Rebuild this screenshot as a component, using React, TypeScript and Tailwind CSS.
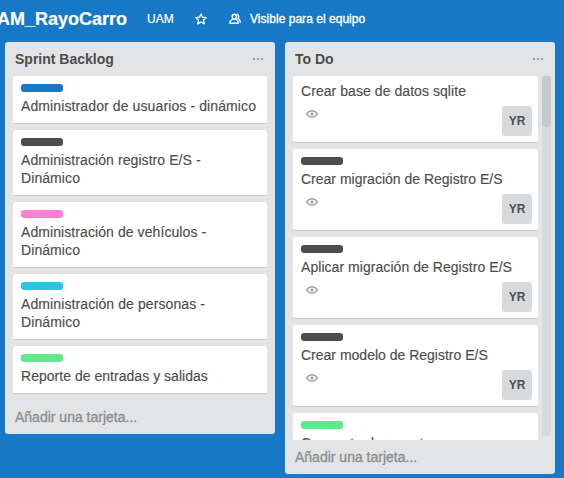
type CardData = { text: string; label?: string; watched?: boolean; tracking?: string };

const backlog: CardData[] = [
  { text: "Administrador de usuarios - dinámico", label: "bg-[#1678c6]", tracking: "tracking-[0.11px]" },
  { text: "Administración registro E/S - Dinámico", label: "bg-[#4d4d4d]", tracking: "tracking-[0.08px]" },
  { text: "Administración de vehículos - Dinámico", label: "bg-[#ff80ce]", tracking: "tracking-[0.08px]" },
  { text: "Administración de personas - Dinámico", label: "bg-[#2cc3e5]", tracking: "tracking-[0.1px]" },
  { text: "Reporte de entradas y salidas", label: "bg-[#61e88c]", tracking: "tracking-[0.03px]" },
];

const todo: CardData[] = [
  { text: "Crear base de datos sqlite", watched: true, tracking: "tracking-[0.06px]" },
  { text: "Crear migración de Registro E/S", label: "bg-[#4d4d4d]", watched: true },
  { text: "Aplicar migración de Registro E/S", label: "bg-[#4d4d4d]", watched: true, tracking: "tracking-[0.05px]" },
  { text: "Crear modelo de Registro E/S", label: "bg-[#4d4d4d]", watched: true },
  { text: "Concepto de reportes", label: "bg-[#61e88c]", tracking: "tracking-[0.15px]" },
];

function StarIcon() {
  return (
    <svg width="12" height="12" viewBox="0 0 12 12" fill="none" stroke="white" strokeWidth="1.3" strokeLinejoin="round">
      <path d="M6 .9 7.5 4.2 11.2 4.6 8.5 7.1 9.3 10.9 6 9 2.7 10.9 3.5 7.1 .8 4.6 4.5 4.2Z" />
    </svg>
  );
}

function TeamIcon() {
  return (
    <svg width="12" height="12" viewBox="0 0 12 12" fill="none" stroke="white" strokeWidth="1.4" strokeLinejoin="round" strokeLinecap="round">
      <path d="M5.300 1.200c1.400 0 2.100 1 2.100 2.300S6.600 6.200 5.300 6.200 3.200 4.800 3.200 3.500 3.900 1.200 5.300 1.200Z" />
      <path d="M3.600 6C1.800 7 1 8 .9 10.300h8.300C9.100 8 8.500 7 7 6" />
      <path d="M8.100 1.300c1.600.5 2 2.700.9 4.100 1.300.8 2.100 1.900 2.300 3.700" />
    </svg>
  );
}

function EyeIcon() {
  return (
    <svg width="12" height="8" viewBox="0 0 12 8" fill="none">
      <path d="M.7 4C3.200-.2 8.800-.2 11.300 4 8.800 8.200 3.200 8.200.7 4Z" stroke="#999" strokeWidth="1.3" />
      <circle cx="6" cy="4" r="1.500" fill="#999" />
    </svg>
  );
}

function Card({ card }: { card: CardData }) {
  return (
    <article className={`shrink-0 rounded-[3px] border-b border-[#c9cbcd] bg-white px-2 ${card.label ? "pt-2" : "pt-1.5"} ${card.watched ? "pb-1.5" : "pb-2"}`}>
      {card.label && <div className={`mb-[5px] h-2 w-[42px] rounded-[3px] ${card.label}`} />}
      <p className={`[-webkit-text-stroke:0.15px] ${card.tracking ?? ""}`}>{card.text}</p>
      {card.watched && (
        <div className="mt-1.5 flex items-start justify-between">
          <span className="mt-1 ml-[5px]"><EyeIcon /></span>
          <span className="-mr-0.5 flex h-[30px] w-[30px] items-center justify-center rounded-[3px] bg-[#d6dadc] text-xs font-bold">YR</span>
        </div>
      )}
    </article>
  );
}

function ListHeader({ title }: { title: string }) {
  return (
    <header className="flex h-[34px] shrink-0 items-center justify-between pr-3 pl-2.5">
      <h2 className="font-bold">{title}</h2>
      <div className="flex gap-[2px]">
        <i className="size-[2px] bg-[#999]" />
        <i className="size-[2px] bg-[#999]" />
        <i className="size-[2px] bg-[#999]" />
      </div>
    </header>
  );
}

function AddCard() {
  return (
    <footer className="flex h-[34px] items-center pl-2.5 text-[#8c8c8c] [-webkit-text-stroke:0.3px]">
      Añadir una tarjeta...
    </footer>
  );
}

export default function App() {
  return (
    <div className="h-[478px] w-[564px] overflow-hidden bg-[#1678c6] font-['Liberation_Sans',Arial,sans-serif] text-sm leading-[18px] text-[#4d4d4d]">
      <nav className="flex h-[42px] items-center pb-1 text-xs text-white">
        <div className="flex w-[127px] justify-end overflow-hidden">
          <h1 className="text-lg leading-6 font-bold [-webkit-text-stroke:0.2px]">UAM_RayoCarro</h1>
        </div>
        <span className="ml-5 w-[48px] [-webkit-text-stroke:0.2px]">UAM</span>
        <StarIcon />
        <span className="ml-[22px]"><TeamIcon /></span>
        <span className="ml-[9px] tracking-[0.03px] [-webkit-text-stroke:0.35px]">Visible para el equipo</span>
      </nav>
      <main className="flex items-start gap-2.5 pl-[5px]">
        <section className="w-[270px] rounded-[3px] bg-[#e2e4e6]">
          <ListHeader title="Sprint Backlog" />
          <div className="flex flex-col gap-1.5 px-2 pb-1.5">
            {backlog.map((card) => <Card key={card.text} card={card} />)}
          </div>
          <AddCard />
        </section>
        <section className="w-[270px] rounded-[3px] bg-[#e2e4e6]">
          <ListHeader title="To Do" />
          <div className="flex h-[364px] gap-1 overflow-hidden pr-1 pl-2">
            <div className="flex w-[245px] flex-col gap-1.5">
              {todo.map((card) => <Card key={card.text} card={card} />)}
            </div>
            <div className="h-[360px] w-[9px] rounded-[4px] bg-[#d6dadc]">
              <div className="h-[51px] rounded-[4px] bg-[#c4c9cc]" />
            </div>
          </div>
          <AddCard />
        </section>
      </main>
    </div>
  );
}
